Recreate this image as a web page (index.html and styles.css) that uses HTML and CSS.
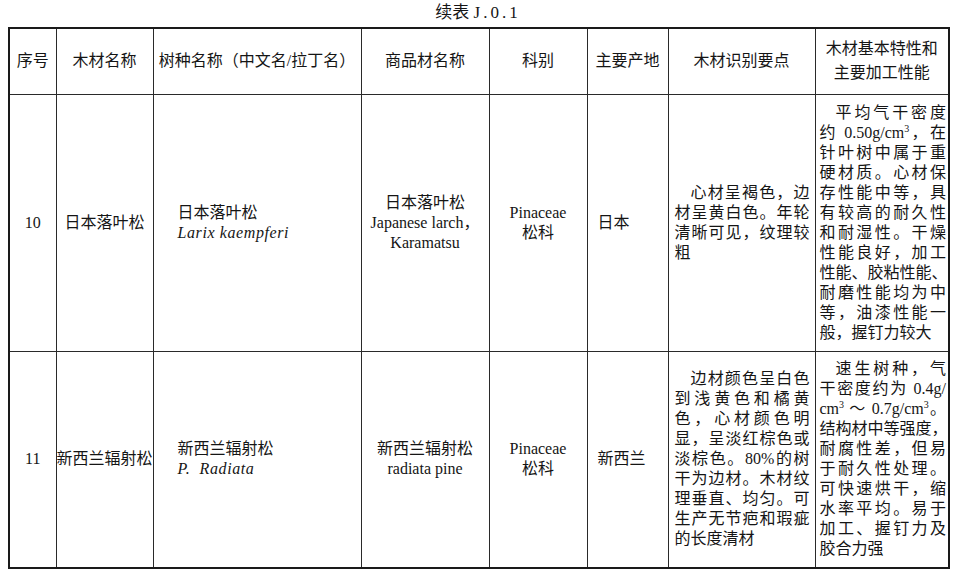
FILE: index.html
```html
<!DOCTYPE html>
<html lang="zh-CN">
<head>
<meta charset="utf-8">
<title>续表 J.0.1</title>
<link rel="stylesheet" href="styles.css">
</head>
<body>
<div class="page">
  <div class="caption">续表 <span class="num">J.0.1</span></div>
  <table class="wood">
    <colgroup>
      <col class="c1"><col class="c2"><col class="c3"><col class="c4"><col class="c5"><col class="c6"><col class="c7"><col class="c8">
    </colgroup>
    <thead>
      <tr class="head">
        <th>序号</th>
        <th>木材名称</th>
        <th>树种名称（中文名/拉丁名）</th>
        <th>商品材名称</th>
        <th>科别</th>
        <th>主要产地</th>
        <th>木材识别要点</th>
        <th class="wrap">木材基本特性和<br>主要加工性能</th>
      </tr>
    </thead>
    <tbody>
      <tr class="r1">
        <td class="center">10</td>
        <td class="center tight">日本落叶松</td>
        <td class="species">日本落叶松<br><i>Larix kaempferi</i></td>
        <td class="center">日本落叶松<br>Japanese larch，<br>Karamatsu</td>
        <td class="center">Pinaceae<br>松科</td>
        <td class="origin">日本</td>
        <td class="para p7">
          <span class="ln first">心材呈褐色，边</span>
          <span class="ln">材呈黄白色。年轮</span>
          <span class="ln">清晰可见，纹理较</span>
          <span class="ln last">粗</span>
        </td>
        <td class="para p8">
          <span class="ln first">平均气干密度</span>
          <span class="ln">约 0.50g/cm<sup>3</sup>，在</span>
          <span class="ln">针叶树中属于重</span>
          <span class="ln">硬材质。心材保</span>
          <span class="ln">存性能中等，具</span>
          <span class="ln">有较高的耐久性</span>
          <span class="ln">和耐湿性。干燥</span>
          <span class="ln">性能良好，加工</span>
          <span class="ln">性能、胶粘性能、</span>
          <span class="ln">耐磨性能均为中</span>
          <span class="ln">等，油漆性能一</span>
          <span class="ln last">般，握钉力较大</span>
        </td>
      </tr>
      <tr class="r2">
        <td class="center">11</td>
        <td class="center tight">新西兰辐射松</td>
        <td class="species">新西兰辐射松<br><i>P.&nbsp; Radiata</i></td>
        <td class="center">新西兰辐射松<br>radiata pine</td>
        <td class="center">Pinaceae<br>松科</td>
        <td class="origin">新西兰</td>
        <td class="para p7">
          <span class="ln first">边材颜色呈白色</span>
          <span class="ln">到浅黄色和橘黄</span>
          <span class="ln">色，心材颜色明</span>
          <span class="ln">显，呈淡红棕色或</span>
          <span class="ln">淡棕色。80%的树</span>
          <span class="ln">干为边材。木材纹</span>
          <span class="ln">理垂直、均匀。可</span>
          <span class="ln">生产无节疤和瑕疵</span>
          <span class="ln last">的长度清材</span>
        </td>
        <td class="para p8">
          <span class="ln first">速生树种，气</span>
          <span class="ln">干密度约为 0.4g/</span>
          <span class="ln">cm<sup>3</sup> ～ 0.7g/cm<sup>3</sup>。</span>
          <span class="ln">结构材中等强度，</span>
          <span class="ln">耐腐性差，但易</span>
          <span class="ln">于耐久性处理。</span>
          <span class="ln">可快速烘干，缩</span>
          <span class="ln">水率平均。易于</span>
          <span class="ln">加工、握钉力及</span>
          <span class="ln last">胶合力强</span>
        </td>
      </tr>
    </tbody>
  </table>
</div>
</body>
</html>
```
FILE: styles.css
```css
html, body {
  margin: 0;
  padding: 0;
  background: #ffffff;
}
body {
  font-family: "Liberation Serif", "Noto Sans CJK SC", serif;
  color: #151515;
  font-size: 16px;
  line-height: 20px;
}
.page {
  width: 953px;
  padding: 2px 0 0 8px;
  box-sizing: border-box;
}
.caption {
  width: 940px;
  text-align: center;
  font-size: 17px;
  line-height: 22px;
  height: 25px;
}
.caption .num {
  letter-spacing: 3px;
}
.wood {
  border-collapse: collapse;
  table-layout: fixed;
  width: 940px;
  border: 2px solid #1a1a1a;
}
.c1 { width: 47px; }
.c2 { width: 97px; }
.c3 { width: 208px; }
.c4 { width: 128px; }
.c5 { width: 98px; }
.c6 { width: 81px; }
.c7 { width: 147px; }
.c8 { width: 134px; }
.wood th,
.wood td {
  border: 1px solid #2a2a2a;
  vertical-align: middle;
  padding: 0 4px;
  font-weight: normal;
  overflow: visible;
}
.wood th {
  text-align: center;
  white-space: nowrap;
}
.wood th.wrap {
  line-height: 24px;
}
.head { height: 66px; }
.r1 { height: 257px; }
.r2 { height: 217px; }
.wood .center {
  text-align: center;
}
.wood .tight {
  padding: 0;
  white-space: nowrap;
}
.wood .species {
  padding-left: 24px;
  text-align: left;
}
.species i {
  font-style: italic;
  letter-spacing: 0.6px;
}
.wood .origin {
  text-align: left;
  padding-left: 10px;
}
.wood .para {
  text-align: left;
}
.wood .p7 {
  padding: 0 5px 0 6px;
}
.wood .p8 {
  padding: 0 2px 0 4px;
}
.ln {
  display: block;
  white-space: nowrap;
  text-align: justify;
  text-align-last: justify;
}
.ln.first {
  padding-left: 1em;
}
.ln.last {
  text-align-last: left;
}
sup {
  font-size: 10px;
  line-height: 0;
  vertical-align: 6px;
}
```
